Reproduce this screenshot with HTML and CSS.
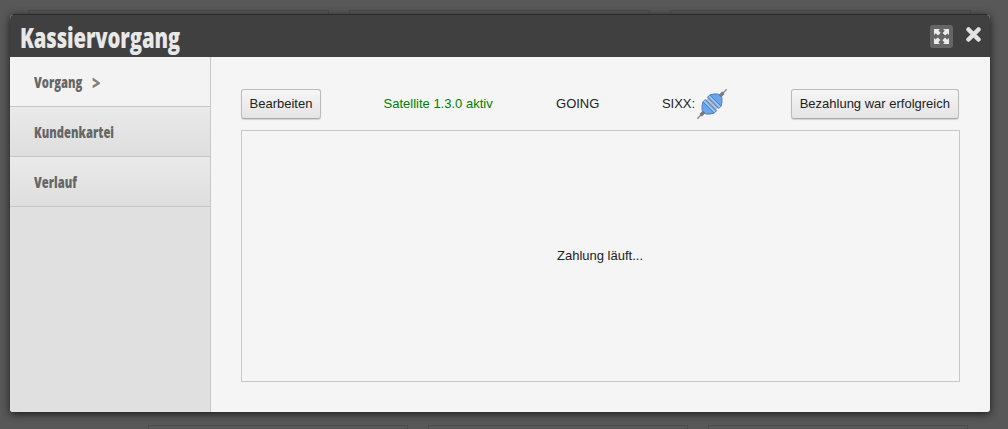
FILE: index.html
```html
<!DOCTYPE html>
<html lang="de">
<head>
    <meta charset="UTF-8">
    <title>Kassiervorgang</title>
    <link rel="stylesheet" href="styles.css">
</head>
<body>
    <div class="backdrop">
        <div class="tile-row top">
            <div class="tile"></div>
            <div class="tile"></div>
            <div class="tile"></div>
        </div>
        <div class="tile-row bottom">
            <div class="tile"></div>
            <div class="tile"></div>
            <div class="tile"></div>
        </div>
    </div>

    <div class="dialog">
        <div class="dialog-head">
            <h1>Kassiervorgang</h1>
            <button class="icon-btn expand" title="Vollbild">
                <svg width="17" height="17" viewBox="0 0 17 17">
                    <path d="M1 1h6L5.400 2.600 7.600 4.800 5 7.400 2.800 5.200 1 7zM16 1v6l-1.600-1.600-2.200 2.200L9.600 5l2.200-2.200L10 1zM1 16v-6l1.600 1.600 2.200-2.200L7.400 12l-2.200 2.200L7 16zM16 16h-6l1.600-1.600-2.200-2.200L12 9.600l2.200 2.200L16 10z" fill="#ececec"/>
                </svg>
            </button>
            <button class="icon-btn close" title="Schließen">
                <svg width="15" height="15" viewBox="0 0 15 15">
                    <path d="M2.500 2.500l10 10M12.500 2.500l-10 10" stroke="#e2e2e2" stroke-width="4.500" stroke-linecap="round"/>
                </svg>
            </button>
        </div>
        <div class="dialog-body">
            <ul class="side-nav">
                <li class="active"><span>Vorgang</span><span class="arrow">&gt;</span></li>
                <li><span>Kundenkartei</span></li>
                <li><span>Verlauf</span></li>
            </ul>
            <div class="main">
                <div class="toolbar">
                    <button class="btn first">Bearbeiten</button>
                    <span class="status-ok">Satellite 1.3.0 aktiv</span>
                    <span>GOING</span>
                    <span class="sixx">SIXX:
                        <svg width="30" height="30" viewBox="-15 -15 30 30">
                            <g transform="rotate(-45)">
                                <path d="M-21 0H21" stroke="#8d9298" stroke-width="1.500"/>
                                <path d="M-16 0H-10M10 0H16" stroke="#767b80" stroke-width="3.500"/>
                                <path d="M0 -7V7" stroke="#b9bdc2" stroke-width="3"/>
                                <path d="M-1.500 -8H-5Q-9 -6 -11.500 -2.500V2.500Q-9 6 -5 8H-1.500z" fill="#6ba6ea" stroke="#3c6ca6" stroke-width=".7"/>
                                <path d="M1.500 -8H5Q9 -6 11.500 -2.500V2.500Q9 6 5 8H1.500z" fill="#6ba6ea" stroke="#3c6ca6" stroke-width=".7"/>
                                <path d="M-3.500 -7.500V7.500M3.500 -7.500V7.500" stroke="#b4d3f6" stroke-width="1"/>
                                <path d="M-5 -7.500V7.500M5 -7.500V7.500" stroke="#3c6ca6" stroke-width=".6"/>
                            </g>
                        </svg>
                    </span>
                    <button class="btn">Bezahlung war erfolgreich</button>
                </div>
                <div class="pay-box">Zahlung läuft...</div>
            </div>
        </div>
    </div>
</body>
</html>
```

FILE: styles.css
```css
html, body {
    margin: 0;
    height: 100%;
}
body {
    background: #585858;
    font-family: "Liberation Sans", Arial, sans-serif;
    font-size: 13px;
    color: #222;
    overflow: hidden;
}
.backdrop {
    height: 429px;
    display: flex;
    flex-direction: column;
    justify-content: space-between;
    box-sizing: border-box;
    padding-top: 10px;
}
.tile-row {
    display: flex;
    gap: 20px;
}
.tile-row.top {
    padding-left: 28px;
}
.tile-row.bottom {
    padding-left: 148px;
}
.tile {
    width: 258px;
    height: 3px;
    border: 1px solid #4c4c4c;
    border-bottom: none;
}
.tile-row.top .tile {
    width: 299px;
}
.dialog {
    position: absolute;
    left: 10px;
    top: 14px;
    width: 980px;
    height: 398px;
    display: flex;
    flex-direction: column;
    border-radius: 5px 5px 3px 3px;
    background: #f5f5f5;
    box-shadow: 0 2px 8px rgba(0,0,0,0.7);
    overflow: hidden;
}
.dialog-head {
    height: 43px;
    flex: none;
    display: flex;
    align-items: center;
    background: #404040;
    border-top: 1px solid #2c2c2c;
    box-sizing: border-box;
    padding: 0 9px 0 10px;
}
.dialog-head h1 {
    margin: 0 auto 0 0;
    font-family: "Open Sans", sans-serif;
    font-size: 29px;
    font-weight: 800;
    line-height: 43px;
    color: #e8e8e8;
    transform: scaleX(0.7);
    transform-origin: left center;
    letter-spacing: -0.2px;
}
.icon-btn {
    border: none;
    padding: 0;
    background: none;
    display: flex;
    align-items: center;
    justify-content: center;
}
.expand {
    width: 23px;
    height: 23px;
    background: #666;
    border-radius: 3px;
    margin-right: 13px;
}
.close {
    width: 15px;
    height: 15px;
    margin-bottom: 4px;
}
.dialog-body {
    flex: 1;
    display: flex;
    min-height: 0;
}
.side-nav {
    width: 200px;
    flex: none;
    margin: 0;
    padding: 0;
    list-style: none;
    background: #e0e0e0;
    border-right: 1px solid #c8c8c8;
}
.side-nav li {
    height: 49px;
    display: flex;
    align-items: center;
    padding-left: 24px;
    background: linear-gradient(#eaeaea, #dedede);
    border-bottom: 1px solid #c6c6c6;
    font-family: "Open Sans", sans-serif;
    font-size: 15px;
    font-weight: 800;
    color: #666;
}
.side-nav li span {
    display: inline-block;
    transform: scaleX(0.75);
    transform-origin: left center;
}
.side-nav li.active {
    background: #f3f3f3;
}
.side-nav li .arrow {
    margin: 3px 0 0 -7px;
    font-size: 19px;
    line-height: 1;
    color: #808080;
}
.main {
    flex: 1;
    padding: 32px 30px 30px;
    display: flex;
    flex-direction: column;
    min-width: 0;
}
.toolbar {
    display: flex;
    align-items: center;
    justify-content: space-between;
    height: 30px;
    margin-right: 1px;
    margin-bottom: 11px;
    flex: none;
}
.toolbar > span {
    padding-bottom: 2px;
}
.btn {
    height: 30px;
    padding: 0 8px 2px;
    font: 13px "Liberation Sans", Arial, sans-serif;
    color: #222;
    background: linear-gradient(#f6f6f6, #e4e4e4);
    border: 1px solid #bbb;
    border-bottom-color: #aaa;
    border-radius: 3px;
    box-shadow: 0 1px 1px rgba(0,0,0,0.15);
}
.btn.first {
    width: 80px;
    padding: 0 0 2px;
}
.status-ok {
    color: #008000;
    min-width: 110px;
}
.sixx {
    display: flex;
    align-items: center;
    gap: 2px;
    margin-right: 1px;
}
.sixx svg {
    margin-top: 2px;
}
.pay-box {
    flex: 1;
    display: flex;
    align-items: center;
    justify-content: center;
    border: 1px solid #c8c8c8;
    padding: 0 1px 2px 0;
}
```
